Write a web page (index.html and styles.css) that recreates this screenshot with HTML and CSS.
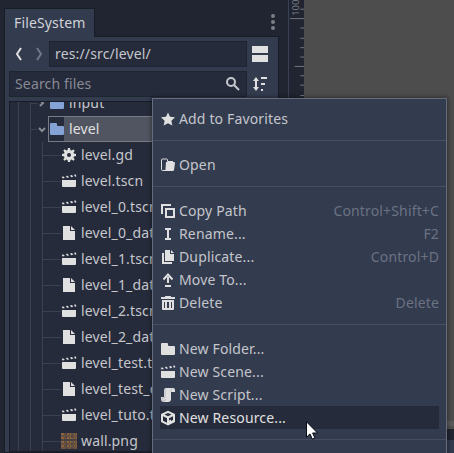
FILE: index.html
```
<!DOCTYPE html>
<html lang="en">
<head>
<meta charset="utf-8">
<title>FileSystem</title>
<link rel="stylesheet" href="styles.css">
</head>
<body>
<svg class="defs" aria-hidden="true">
  <symbol id="folder" viewBox="0 0 16 16"><path d="M1 3q0-1 1-1h5q1 0 1 1v1q0 1 1 1h5q1 0 1 1v7q0 1-1 1H2q-1 0-1-1z"/></symbol>
  <symbol id="scene" viewBox="0 0 16 16"><path d="M1 7h14v6q0 1-1 1H2q-1 0-1-1zM.6 3.7l2-.3 1.2 1.7-2 .4zM4.800 3l2-.3 1.200 1.700-2 .4zM9 2.400l2-.3 1.200 1.700-2 .4zM13 1.800l2-.3.2 2-1.200.2z"/></symbol>
  <symbol id="file" viewBox="0 0 16 16"><path d="M2 1h7v5h5v9H2zM10 1l4 4h-4z"/></symbol>
  <symbol id="gear" viewBox="0 0 16 16"><path fill-rule="evenodd" d="M7 1h2l.5 2.200 1 .4 1.900-1.200 1.300 1.300-1.200 1.900.4 1L15 7v2l-2.100.5-.4 1 1.200 1.900-1.300 1.300-1.900-1.200-1 .4L9 15H7l-.5-2.100-1-.4-1.900 1.200-1.300-1.300 1.200-1.900-.4-1L1 9V7l2.100-.5.4-1-1.200-1.900 1.300-1.300 1.900 1.200 1-.4zM8 6a2 2 0 1 0 0 4 2 2 0 0 0 0-4z"/></symbol>
  <symbol id="star" viewBox="0 0 16 16"><path d="M8 1.500l2 4.200 5 .6-3.600 3.400.9 4.800L8 12.200l-4.300 2.300.9-4.800L1 6.300l5-.6z"/></symbol>
  <symbol id="open" viewBox="0 0 16 16"><path d="M6 5h8q1 0 1 1l-1 7q-.2 1-1 1H4q1.500-.3 1.500-2z"/><path d="M13 4.500H7.500V3q0-1-1-1h-4q-1 0-1 1v9.500q0 1 1 1H5" fill="none" stroke="currentColor"/></symbol>
  <symbol id="copy" viewBox="0 0 16 16"><path d="M2 11V2h9M6 6h8v8H6z" fill="none" stroke="currentColor" stroke-width="2"/></symbol>
  <symbol id="rename" viewBox="0 0 16 16"><path d="M5 2h6v2H9v8h2v2H5v-2h2V4H5z"/></symbol>
  <symbol id="duplicate" viewBox="0 0 16 16"><path d="M5 1h5v4h4v7H5zM11 1l3 3h-3zM2 4h2v9h8v2H2z"/></symbol>
  <symbol id="move" viewBox="0 0 16 16"><path d="M5 13h6v2H5zM7 11V5h2v6z"/><path d="M3.500 7.500L8 2.500l4.500 5" fill="none" stroke="currentColor" stroke-width="2"/></symbol>
  <symbol id="trash" viewBox="0 0 16 16"><path fill-rule="evenodd" d="M5 1h6v1h4v2H1V2h4zM2 5h12v9q0 1-1 1H3q-1 0-1-1zM4 7v6h1V7zM7 7v6h2V7zM11 7v6h1V7z"/></symbol>
  <symbol id="script" viewBox="0 0 16 16"><path d="M6 1q-2 0-2 2v7H1v2q0 3 3 3h4q3 0 3-3V5h4V3q0-2-2-2z"/><path d="M6 2q-1 0-1 1v8H2v1q0 2 2 2 1.500 0 1.500-2M11 5V3q0-1 1-1" fill="none" stroke="#b9bbc0"/></symbol>
  <symbol id="resource" viewBox="0 0 16 16"><path fill-rule="evenodd" d="M8 .8L15 4v8l-7 3.500L1 12V4zM8 3L4.500 4.600 8 6.300l3.500-1.700zM3 6.200v4.600l4 2V8.200zM13 6.200L9 8.200v2.300l2-1V11l2-1z"/></symbol>
</svg>
<div class="editor">
  <section class="dock">
    <header class="tabs">
      <div class="tab">FileSystem</div>
      <svg class="dots" viewBox="0 0 4 16"><circle cx="2" cy="2" r="2"/><circle cx="2" cy="8" r="2"/><circle cx="2" cy="14" r="2"/></svg>
    </header>
    <div class="panel">
      <div class="bar">
        <svg class="nav" viewBox="0 0 40 16"><path d="M12 2L8 8l4 6" class="on"/><path d="M28 2l4 6-4 6" class="off"/></svg>
        <div class="field path">res://src/level/</div>
        <svg class="ico tool" viewBox="0 0 16 16"><path d="M0 0h16v7H0zM0 9h16v7H0z"/></svg>
      </div>
      <div class="bar">
        <div class="field search"><span>Search files</span>
          <svg class="ico" viewBox="0 0 16 16"><circle cx="6" cy="6" r="4" class="line"/><path d="M9 9l5 5" class="line"/></svg>
        </div>
        <svg class="ico tool" viewBox="0 0 16 16"><path d="M4 1l3 4H5v6h2l-3 4-3-4h2V5H1zM9 1h6v2H9zM9 7h4v2H9zM9 13h2v2H9z"/></svg>
      </div>
      <div class="tree">
        <div class="row top"><svg class="arrow" viewBox="0 0 8 8"><path d="M2 1l3 3-3 3"/></svg><div class="cell"><svg class="ico blue"><use href="#folder"/></svg><span>input</span></div></div>
        <div class="row top"><svg class="arrow" viewBox="0 0 8 8"><path d="M1 3l3 3 3-3"/></svg><div class="cell selected"><svg class="ico blue"><use href="#folder"/></svg><span>level</span></div></div>
        <div class="children">
          <div class="row"><svg class="ico"><use href="#gear"/></svg><span>level.gd</span></div>
          <div class="row"><svg class="ico"><use href="#scene"/></svg><span>level.tscn</span></div>
          <div class="row"><svg class="ico"><use href="#scene"/></svg><span>level_0.tscn</span></div>
          <div class="row"><svg class="ico"><use href="#file"/></svg><span>level_0_data.tres</span></div>
          <div class="row"><svg class="ico"><use href="#scene"/></svg><span>level_1.tscn</span></div>
          <div class="row"><svg class="ico"><use href="#file"/></svg><span>level_1_data.tres</span></div>
          <div class="row"><svg class="ico"><use href="#scene"/></svg><span>level_2.tscn</span></div>
          <div class="row"><svg class="ico"><use href="#file"/></svg><span>level_2_data.tres</span></div>
          <div class="row"><svg class="ico"><use href="#scene"/></svg><span>level_test.tscn</span></div>
          <div class="row"><svg class="ico"><use href="#file"/></svg><span>level_test_data.tres</span></div>
          <div class="row"><svg class="ico"><use href="#scene"/></svg><span>level_tuto.tscn</span></div>
          <div class="row"><svg class="ico wall" viewBox="0 0 16 16"><path fill="#5b4b40" d="M0 0h16v16H0z"/><path d="M0 1h16M0 5h16M0 9h16M0 13h16" stroke="#bd7b3d" stroke-dasharray="3 1 1 1 2 1"/><path d="M0 3h16M0 11h16M0 15h16" stroke="#8c633e" stroke-dasharray="1 1 2 2"/><path d="M0 7h16M5 0v16M11 0v16" stroke="#343b46" stroke-dasharray="2 1"/></svg><span>wall.png</span></div>
        </div>
      </div>
    </div>
  </section>
  <section class="view">
    <svg class="ruler" viewBox="0 0 16 100"><path d="M1 16.500h15M6 67.500h10M12 6.500h4M12 26.500h4M12 37.500h4M12 47.500h4M12 57.500h4M12 77.500h4M12 87.500h4M12 98.500h4"/><text transform="translate(11 13.500) rotate(-90)">100</text></svg>
    <div class="canvas">
      <div class="scroll"></div>
      <div class="bottom"><div></div></div>
    </div>
  </section>
</div>
<nav class="menu">
  <div class="item"><svg class="ico"><use href="#star"/></svg><span>Add to Favorites</span></div>
  <hr>
  <div class="item"><svg class="ico"><use href="#open"/></svg><span>Open</span></div>
  <hr>
  <div class="item"><svg class="ico"><use href="#copy"/></svg><span>Copy Path</span><kbd>Control+Shift+C</kbd></div>
  <div class="item"><svg class="ico"><use href="#rename"/></svg><span>Rename...</span><kbd>F2</kbd></div>
  <div class="item"><svg class="ico"><use href="#duplicate"/></svg><span>Duplicate...</span><kbd>Control+D</kbd></div>
  <div class="item"><svg class="ico"><use href="#move"/></svg><span>Move To...</span></div>
  <div class="item"><svg class="ico"><use href="#trash"/></svg><span>Delete</span><kbd>Delete</kbd></div>
  <hr>
  <div class="item"><svg class="ico"><use href="#folder"/></svg><span>New Folder...</span></div>
  <div class="item"><svg class="ico"><use href="#scene"/></svg><span>New Scene...</span></div>
  <div class="item"><svg class="ico"><use href="#script"/></svg><span>New Script...</span></div>
  <div class="item hover"><svg class="ico"><use href="#resource"/></svg><span>New Resource...</span></div>
  <hr>
</nav>
<svg class="cursor" viewBox="0 0 12 19"><path d="M.5.8v15.400l3.500-3.300 2.300 5.200 2.600-1.100-2.300-5h4.900z"/></svg>
</body>
</html>
```
FILE: styles.css
```
* { box-sizing: border-box; }
body {
  margin: 0; width: 454px; height: 453px; overflow: hidden;
  background: #202531; color: #c4c6cb;
  font: 14px/20px "Noto Sans", sans-serif;
  letter-spacing: .15px; white-space: nowrap;
}
.defs { position: absolute; width: 0; height: 0; }
.ico { width: 16px; height: 16px; flex: none; fill: #e0e0e0; color: #e0e0e0; }
.line { fill: none; stroke: #c5c8ce; stroke-width: 2; }
.editor { display: grid; grid-template-columns: 288px 1fr; height: 453px; }
.dock { display: flex; flex-direction: column; padding: 8px 9px 0 4px; overflow: hidden; min-height: 0; height: 453px; }
.tabs { display: flex; justify-content: space-between; height: 28px; flex: none; padding-right: 4px; }
.tab {
  width: 91px; height: 29px; padding: 4px 0 0 9px; z-index: 1;
  background: #333b4f; border: 1px solid #191d27; border-bottom: 0; color: #d0d2d7;
}
.dots { width: 4px; height: 16px; margin-top: 6px; fill: #7c7f87; }
.panel { flex: 1; min-height: 0; background: #333b4f; border: 1px solid #191d27; padding: 4px 4px 0; display: flex; flex-direction: column; gap: 4px; }
.bar { display: flex; align-items: center; height: 26px; flex: none; }
.nav { width: 40px; height: 16px; flex: none; fill: none; stroke-width: 2; }
.on { stroke: #e0e0e0; }
.off { stroke: #71788a; }
.field { height: 26px; background: #262b3b; border: 1px solid #1f2431; padding: 2px 5px; display: flex; align-items: center; }
.path { width: 198px; }
.search { width: 238px; color: #868a94; justify-content: space-between; }
.tool { margin-left: 5px; }
.tree { flex: 1; overflow: hidden; background: #262b3b; border: 1px solid #191d27; padding-left: 8px; background-image: linear-gradient(#3c4150, #3c4150), linear-gradient(#3c4150, #3c4150); background-size: 1px 100%; background-position: 8px 0, 20px 0; background-repeat: no-repeat; }
.row { display: flex; align-items: center; height: 26px; }
.top { padding-left: 13px; background: linear-gradient(#3c4150, #3c4150) 13px 13px / 6px 1px no-repeat; }
.top:first-child { margin-top: -12px; }
.arrow { width: 8px; height: 8px; margin: 0 2px 0 7px; fill: none; stroke: #888b93; stroke-width: 2; }
.cell { display: flex; align-items: center; flex: 1; height: 26px; padding-left: 1px; border: 1px solid transparent; gap: 4px; padding-left: 0; }
.selected { background: linear-gradient(90deg, #262b3b 15px, #515561 15px); border-color: #777b86; color: #e0e0e0; }
.blue { fill: #84a2d5; }
.children { margin-left: 24px; border-left: 1px solid #3c4150; }
.children .row { padding-left: 18px; gap: 4px; background: linear-gradient(#3c4150, #3c4150) 0 13px / 18px 1px no-repeat; }
.view { display: grid; grid-template-columns: 16px 1fr; border: 0; }
.ruler { width: 16px; height: 100px; border-left: 1px solid #394155; stroke: #777b84; fill: none; }
.ruler text { font: 10px "Noto Sans", sans-serif; fill: #777b84; stroke: none; letter-spacing: 0; }
.canvas { background: #4d4d4d; display: flex; flex-direction: column; justify-content: flex-end; }
.scroll { height: 8px; background: #5a5a5a; border-bottom: 3px solid #505050; }
.bottom { height: 24px; background: #202531; padding-top: 11px; }
.bottom div { height: 13px; background: #333b4f; }
.menu {
  position: absolute; left: 152px; top: 98px; width: 295px; height: 370px; padding: 7px 7px 0;
  background: #333b4f; border: 2px solid #666c7c; border-width: 1px; box-shadow: 0 0 4px 1px rgba(0,0,0,.4);
  padding-top: 8px;
}
.item { display: flex; align-items: center; height: 23px; gap: 3px; padding-left: 0; }
.item kbd { margin-left: auto; font: inherit; color: #6b7282; }
.hover { background: #262b3b; color: #e0e0e0; }
.menu hr { height: 1px; margin: 10px -7px 12px; border: 0; background: #474e61; }
.cursor { position: absolute; left: 306px; top: 421px; width: 12px; height: 19px; fill: #fff; stroke: #080b14; stroke-width: 1; }
```
